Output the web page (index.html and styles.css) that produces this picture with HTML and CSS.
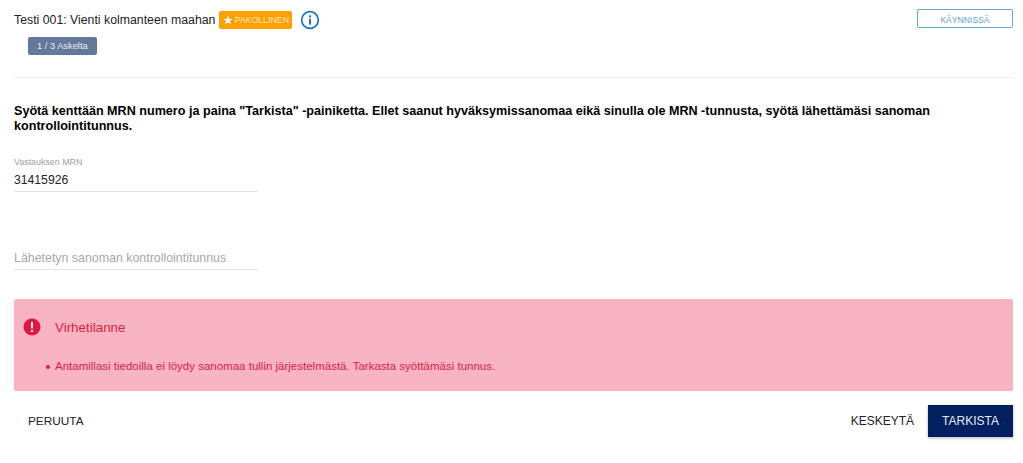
FILE: index.html
```html
<!DOCTYPE html>
<html lang="fi">
<head>
    <meta charset="UTF-8">
    <meta name="viewport" content="width=device-width, initial-scale=1.0">
    <title>Testi 001</title>
    <link rel="stylesheet" href="styles.css">
</head>
<body>
    <div class="page">
        <div class="header">
            <div class="header-main">
                <div class="title-row">
                    <span class="test-title">Testi 001: Vienti kolmanteen maahan</span>
                    <span class="badge-required">
                        <svg class="star" viewBox="0 0 24 24"><path d="M12 2l3 6.900 7.500.7-5.700 4.900 1.700 7.300L12 18.100 5.500 21.800l1.700-7.300L1.500 9.600 9 8.900z"/></svg>PAKOLLINEN
                    </span>
                    <svg class="info" viewBox="0 0 24 24">
                        <circle cx="12" cy="12" r="10" fill="none" stroke="#1e6fc4" stroke-width="2"/>
                        <rect x="10.800" y="10.500" width="2.400" height="7" fill="#1e6fc4"/>
                        <rect x="10.800" y="6.500" width="2.400" height="2.400" fill="#1e6fc4"/>
                    </svg>
                </div>
                <span class="steps">1 / 3 Askelta</span>
            </div>
            <div class="status">KÄYNNISSÄ</div>
        </div>

        <p class="instructions">Syötä kenttään MRN numero ja paina "Tarkista" -painiketta. Ellet saanut hyväksymissanomaa eikä sinulla ole MRN -tunnusta, syötä lähettämäsi sanoman kontrollointitunnus.</p>

        <div class="field">
            <div class="field-label">Vastauksen MRN</div>
            <div class="field-value">31415926</div>
        </div>
        <div class="field field-empty">
            <div class="field-placeholder">Lähetetyn sanoman kontrollointitunnus</div>
        </div>

        <div class="error-box">
            <div class="error-head">
                <svg class="error-icon" viewBox="0 0 18 18">
                    <circle cx="9" cy="9" r="8.500" fill="#e5173f"/>
                    <rect x="8" y="4" width="2" height="6.500" fill="#fff"/>
                    <rect x="8" y="12" width="2" height="2" fill="#fff"/>
                </svg>
                <span class="error-title">Virhetilanne</span>
            </div>
            <ul class="error-list">
                <li>Antamillasi tiedoilla ei löydy sanomaa tullin järjestelmästä. Tarkasta syöttämäsi tunnus.</li>
            </ul>
        </div>

        <div class="actions">
            <button class="btn btn-cancel">PERUUTA</button>
            <div class="actions-right">
                <button class="btn">KESKEYTÄ</button>
                <button class="btn btn-primary">TARKISTA</button>
            </div>
        </div>
    </div>
</body>
</html>
```
FILE: styles.css
```css
body, html {
    margin: 0;
    height: 100%;
    background-color: white;
    color: #212121;
    font-family: "Liberation Sans", Arial, sans-serif;
}

.page {
    padding: 0 10px 0 14px;
}

.header {
    display: flex;
    justify-content: space-between;
    align-items: flex-start;
    height: 77px;
    border-bottom: 1px solid #eeeeee;
}

.header-main {
    display: flex;
    flex-direction: column;
    align-items: flex-start;
}

.title-row {
    display: flex;
    align-items: center;
    height: 20px;
    margin-top: 10px;
}

.test-title {
    font-size: 12.300px;
    color: #222222;
}

.badge-required {
    display: inline-flex;
    align-items: center;
    height: 18px;
    margin-left: 4px;
    padding: 0 3px 0 4px;
    background-color: #ffa000;
    color: #ffe9c0;
    font-size: 8.800px;
    border-radius: 2px;
}

.star {
    width: 10px;
    height: 10px;
    margin-right: 1px;
    fill: white;
}

.info {
    width: 20px;
    height: 20px;
    margin-left: 8px;
}

.steps {
    display: block;
    margin: 7px 0 0 14px;
    padding: 0 9px;
    height: 18px;
    line-height: 18px;
    background-color: #64789b;
    color: #e8ecf2;
    font-size: 9.300px;
    border-radius: 2px;
}

.status {
    width: 94px;
    height: 17px;
    margin-top: 9px;
    line-height: 20px;
    text-align: center;
    border: 1px solid #62a9d8;
    border-radius: 2px;
    color: #5a9fd6;
    font-size: 8.600px;
}

.instructions {
    margin: 26px 0 0 0;
    font-size: 12.600px;
    line-height: 15px;
    font-weight: bold;
    color: #000000;
}

.field {
    width: 244px;
    margin-top: 23px;
    border-bottom: 1px solid #e3e3e3;
}

.field-label {
    font-size: 8.900px;
    line-height: 10px;
    color: #a0a0a0;
}

.field-value {
    margin-top: 5px;
    padding-bottom: 3px;
    font-size: 12.200px;
    line-height: 16px;
    color: #222222;
}

.field-empty {
    margin-top: 58px;
}

.field-placeholder {
    padding-bottom: 3px;
    font-size: 12.400px;
    line-height: 16px;
    color: #a8a8a8;
}

.error-box {
    height: 92px;
    margin-top: 29px;
    background-color: #f8b4c0;
    border-radius: 2px;
    box-sizing: border-box;
    padding: 19px 9px 0 9px;
}

.error-head {
    display: flex;
    align-items: center;
}

.error-icon {
    width: 18px;
    height: 18px;
}

.error-title {
    margin-left: 14px;
    font-size: 13.400px;
    color: #d81e48;
}

.error-list {
    margin: 23px 0 0 0;
    padding-left: 32px;
    list-style: none;
    font-size: 11.500px;
    line-height: 14px;
    color: #d81e48;
}

.error-list li {
    position: relative;
}

/* small dot, closer to the text than the default bullet */
.error-list li::before {
    content: "";
    position: absolute;
    left: -9px;
    top: 6px;
    width: 4px;
    height: 4px;
    border-radius: 50%;
    background-color: #d81e48;
}

.actions {
    display: flex;
    justify-content: space-between;
    align-items: center;
    margin-top: 14px;
}

.actions-right {
    display: flex;
    align-items: center;
}

.btn {
    border: none;
    background-color: transparent;
    padding: 0 14px;
    height: 32px;
    font-family: inherit;
    font-size: 12px;
    color: #222222;
}

.btn-cancel {
    font-size: 11.800px;
}

.btn-primary {
    background-color: #02205f;
    color: #e6ebf5;
    box-shadow: 0 1px 3px rgba(0, 0, 0, 0.3);
}
```
